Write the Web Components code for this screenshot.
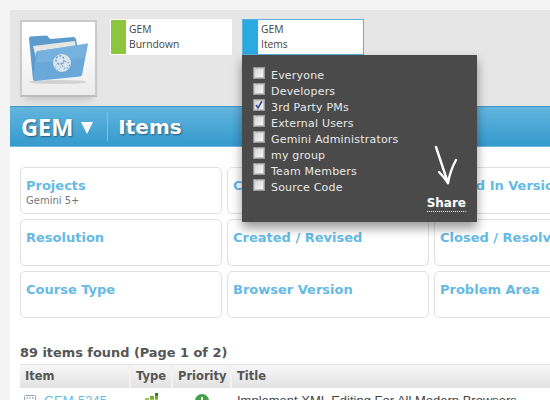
<!DOCTYPE html>
<html>
<head>
<meta charset="utf-8">
<style>
  html, body { margin: 0; height: 100%; overflow: hidden; }
  body { background: #f4f4f4; padding: 10px 0 0 10px; box-sizing: border-box; width: 550px; height: 400px; font-family: "DejaVu Sans", sans-serif; }
</style>
</head>
<body>
<gem-page>
  <gem-top slot="top">
    <gem-logo></gem-logo>
    <gem-card color="#8cc63f" line1="GEM" line2="Burndown"></gem-card>
    <gem-card color="#29abe2" line1="GEM" line2="Items" active>
      <gem-share>
        <gem-check label="Everyone"></gem-check>
        <gem-check label="Developers"></gem-check>
        <gem-check label="3rd Party PMs" checked></gem-check>
        <gem-check label="External Users"></gem-check>
        <gem-check label="Gemini Administrators"></gem-check>
        <gem-check label="my group"></gem-check>
        <gem-check label="Team Members"></gem-check>
        <gem-check label="Source Code"></gem-check>
      </gem-share>
    </gem-card>
  </gem-top>
  <gem-bar slot="bar" project="GEM" title="Items"></gem-bar>
  <gem-filters slot="filters">
    <gem-filter label="Projects" value="Gemini 5+"></gem-filter>
    <gem-filter label="Component"></gem-filter>
    <gem-filter label="Found In Version"></gem-filter>
    <gem-filter label="Resolution"></gem-filter>
    <gem-filter label="Created / Revised"></gem-filter>
    <gem-filter label="Closed / Resolved"></gem-filter>
    <gem-filter label="Course Type"></gem-filter>
    <gem-filter label="Browser Version"></gem-filter>
    <gem-filter label="Problem Area"></gem-filter>
  </gem-filters>
  <gem-results slot="results"></gem-results>
</gem-page>
<script>
class GemPage extends HTMLElement {
    constructor() {
        super();
        this.attachShadow({ mode: 'open' });
        this.shadowRoot.innerHTML = /* html */`
        <style>
            :host { display: block; width: 540px; height: 390px; background: #fff; overflow: hidden; }
            .top { background: #e6e6e6; height: 96px; }
        </style>
        <div class="top"><slot name="top"></slot></div>
        <slot name="bar"></slot>
        <slot name="filters"></slot>
        <slot name="results"></slot>
        `;
    }
}

class GemTop extends HTMLElement {
    constructor() {
        super();
        this.attachShadow({ mode: 'open' });
        this.shadowRoot.innerHTML = /* html */`
        <style>
            :host { display: flex; gap: 10px; padding: 9px 0 0 10px; align-items: flex-start; }
        </style>
        <slot></slot>
        `;
    }
}

class GemLogo extends HTMLElement {
    constructor() {
        super();
        this.attachShadow({ mode: 'open' });
        this.shadowRoot.innerHTML = /* html */`
        <style>
            :host { display: block; width: 73px; height: 73px; margin: 1px 3px 0 0; border: 2px solid #cbcbcb; border-bottom-color: #bdbdbd; background: linear-gradient(#fff 25%, #ebebeb); box-shadow: 0 7px 8px -5px rgba(0,0,0,.18); }
            svg { display: block; }
        </style>
        <svg width="73" height="73" viewBox="0 0 73 73">
            <ellipse cx="36" cy="60" rx="29" ry="2" fill="#c4c4c4" opacity=".7"/>
            <path d="M7 16 8 14.5 25 13.5 28 17 52 15 54 17 58 38 11 58Z" fill="#5b9bcd"/>
            <path d="M11 24 53 19 55 34 16 44Z" fill="#e6e6e4"/>
            <path d="M16 29 66 21.5 60 53 Q60 54 58 54.5 L13 59 Q11 59 11 57 L14 31 Q14 29 16 29Z" fill="#69a8d9"/>
            <path d="M16 29 66 21.5 63 36 14 41Z" fill="#84b9e1" opacity=".55"/>
            <circle cx="40" cy="41" r="9" fill="#d9e6f0"/>
            <circle cx="38" cy="38" r="4" fill="none" stroke="#6d9fc4" stroke-width="1.5" stroke-dasharray="2 1.5"/>
            <circle cx="44" cy="43" r="3.5" fill="none" stroke="#7aa8ca" stroke-width="1.2" stroke-dasharray="1.5 1.5"/>
            <circle cx="36" cy="45" r="2.5" fill="none" stroke="#8fb4d0" stroke-width="1" stroke-dasharray="1 1"/>
        </svg>
        `;
    }
}

class GemCard extends HTMLElement {
    constructor() {
        super();
        this.attachShadow({ mode: 'open' });
    }

    connectedCallback() {
        const active = this.hasAttribute('active');
        this.shadowRoot.innerHTML = /* html */`
        <style>
            :host { display: block; position: relative; width: 122px; height: 36px; box-sizing: border-box; background: #fff; border: 1px solid ${active ? '#5bb2dc' : '#fff'}; font: 10.3px/15px "Open Sans", sans-serif; color: #444; }
            :host::before { content: ""; position: absolute; z-index: -1; left: 10px; right: 6px; bottom: 0; height: 8px; box-shadow: 0 4px 7px rgba(0,0,0,.3); }
            .wrap { display: flex; height: 100%; background: #fff; }
            .tab { width: 15px; background: ${this.getAttribute('color')}; }
            .text { padding: 1.5px 0 0 3px; }
        </style>
        <div class="wrap">
            <div class="tab"></div>
            <div class="text"><div>${this.getAttribute('line1')}</div><div>${this.getAttribute('line2')}</div></div>
        </div>
        <slot></slot>
        `;
    }
}

class GemShare extends HTMLElement {
    constructor() {
        super();
        this.attachShadow({ mode: 'open' });
        this.shadowRoot.innerHTML = /* html */`
        <style>
            :host { display: block; position: absolute; z-index: 5; left: -1px; top: 35px; width: 235px; height: 167px; box-sizing: border-box; padding: 12px 0 0 11px; background: #4a4a4a; box-shadow: 0 6px 10px rgba(0,0,0,.4); font-family: "DejaVu Sans", sans-serif; }
            .arrow { position: absolute; left: 190px; top: 88px; }
            .share { position: absolute; right: 11px; top: 141px; font: bold 12px/15px "DejaVu Sans", sans-serif; color: #fff; border-bottom: 1px dotted #fff; }
        </style>
        <slot></slot>
        <svg class="arrow" width="36" height="48" viewBox="0 0 36 48">
            <path d="M4 4 Q10 22 16 40 Q18 28 24 17" fill="none" stroke="#fff" stroke-width="2.4" stroke-linecap="round" stroke-linejoin="round"/>
            <path d="M16 40 Q12 34 7 29" fill="none" stroke="#fff" stroke-width="2.4" stroke-linecap="round"/>
        </svg>
        <span class="share">Share</span>
        `;
    }
}

class GemCheck extends HTMLElement {
    constructor() {
        super();
        this.attachShadow({ mode: 'open' });
    }

    connectedCallback() {
        const tick = this.hasAttribute('checked')
            ? '<svg width="10" height="10" viewBox="0 0 10 10"><path d="M2 5 4 8 8 1" fill="none" stroke="#3b4c96" stroke-width="1.6"/></svg>'
            : '';
        this.shadowRoot.innerHTML = /* html */`
        <style>
            :host { display: flex; align-items: center; height: 16px; color: #e8e8e8; font-size: 11px; letter-spacing: .2px; }
            .box { display: flex; align-items: center; justify-content: center; width: 10px; height: 10px; margin: -5px 6px 0 0; border: 1px solid #9a9a9a; outline: 1px solid #c4c4c4; outline-offset: -2px; background: linear-gradient(135deg, #cfcfcf, #fdfdfd); }
        </style>
        <span class="box">${tick}</span><span>${this.getAttribute('label')}</span>
        `;
    }
}

class GemBar extends HTMLElement {
    constructor() {
        super();
        this.attachShadow({ mode: 'open' });
    }

    connectedCallback() {
        this.shadowRoot.innerHTML = /* html */`
        <style>
            :host { display: flex; align-items: center; height: 41px; box-sizing: border-box; border-top: 1px solid #3f97c6; border-bottom: 1px solid #69bde3; background: linear-gradient(#62b5de, #359acd); color: #fff; text-shadow: 1px 1px 2px rgba(0,0,0,.45); padding-left: 11px; }
            .project { font: bold 23.5px/30px "Open Sans", sans-serif; }
            .caret { width: 0; height: 0; margin: 3px 14px 0 8px; border: 6px solid transparent; border-top: 12px solid #fff; border-bottom: 0; }
            .sep { width: 1px; height: 29px; background: #7cc3e6; }
            .title { margin-left: 10px; font: bold 20px/30px "DejaVu Sans", sans-serif; }
        </style>
        <span class="project">${this.getAttribute('project')}</span>
        <span class="caret"></span>
        <span class="sep"></span>
        <span class="title">${this.getAttribute('title')}</span>
        `;
    }
}

class GemFilters extends HTMLElement {
    constructor() {
        super();
        this.attachShadow({ mode: 'open' });
        this.shadowRoot.innerHTML = /* html */`
        <style>
            :host { display: grid; grid-template-columns: 202px 202px 202px; grid-auto-rows: 47px; gap: 5px; padding: 20px 0 0 10px; overflow: hidden; }
        </style>
        <slot></slot>
        `;
    }
}

class GemFilter extends HTMLElement {
    constructor() {
        super();
        this.attachShadow({ mode: 'open' });
    }

    connectedCallback() {
        const value = this.getAttribute('value');
        this.shadowRoot.innerHTML = /* html */`
        <style>
            :host { display: block; box-sizing: border-box; border: 1px solid #e0e0e0; border-radius: 5px; padding: 10px 0 0 5px; white-space: nowrap; }
            .label { font: bold 13px/16px "DejaVu Sans", sans-serif; color: #64bae4; }
            .value { font: 10px/13px "DejaVu Sans", sans-serif; color: #777; }
        </style>
        <div class="label">${this.getAttribute('label')}</div>
        ${value ? `<div class="value">${value}</div>` : ''}
        `;
    }
}

class GemResults extends HTMLElement {
    constructor() {
        super();
        this.attachShadow({ mode: 'open' });
        this.shadowRoot.innerHTML = /* html */`
        <style>
            :host { display: block; padding: 26px 0 0 10px; color: #555; font-family: "DejaVu Sans", sans-serif; }
            h2 { margin: 0; font: bold 12.9px/18px "DejaVu Sans", sans-serif; color: #555; }
            .table { margin-top: 2px; }
            .row { display: grid; grid-template-columns: 111px 42px 59px auto; height: 24px; box-sizing: border-box; border-top: 1px solid #e2e2e2; background: linear-gradient(#f7f7f7, #e2e2e2); font: bold 11.5px/23px "DejaVu Sans", sans-serif; }
            .row span { padding-left: 5px; border-right: 2px solid #f2f2f2; }
            .row span:last-child { border-right: 0; }
            .item { display: grid; grid-template-columns: 111px 42px 59px auto; font: 13px/16px "Liberation Sans", sans-serif; }
            .item > span { display: flex; align-items: flex-start; height: 20px; overflow: hidden; }
            .link { color: #64bae4; gap: 8px; padding: 5px 0 0 4px; box-sizing: border-box; }
            .link svg { margin-top: 2px; }
            .type { padding: 5px 0 0 14px; box-sizing: border-box; }
            .priority { padding: 6px 0 0 22px; box-sizing: border-box; }
            .item .title { padding: 5px 0 0 5px; box-sizing: border-box; color: #444; white-space: nowrap; }
        </style>
        <h2>89 items found (Page 1 of 2)</h2>
        <div class="table">
            <div class="row"><span>Item</span><span>Type</span><span>Priority</span><span>Title</span></div>
            <div class="item">
                <span class="link"><svg width="12" height="12" viewBox="0 0 12 12"><rect x=".5" y=".5" width="11" height="11" rx="1" fill="#fff" stroke="#98a6b8"/><path d="M2.5 3H4M5.200 3h1.500M8 3h1.500" stroke="#6b7f99"/></svg>GEM-5245</span>
                <span class="type"><svg width="14" height="12" viewBox="0 0 14 12"><path d="M10 0h3v3h-3z" fill="#2f7d1f"/><path d="M5 3h4v3H5zM10 3h3v3h-3z" fill="#76ac32"/><path d="M0 5h4v3H0zM5 6h4v3H5zM10 6h3v3h-3z" fill="#9cc45a"/></svg></span>
                <span class="priority"><svg width="14" height="14" viewBox="0 0 14 14"><circle cx="7" cy="7" r="7" fill="#43a047"/><path d="M7 3v5M7 9.5v2" stroke="#fff" stroke-width="2"/></svg></span>
                <span class="title">Implement XML Editing For All Modern Browsers</span>
            </div>
        </div>
        `;
    }
}

customElements.define('gem-page', GemPage);
customElements.define('gem-top', GemTop);
customElements.define('gem-logo', GemLogo);
customElements.define('gem-card', GemCard);
customElements.define('gem-share', GemShare);
customElements.define('gem-check', GemCheck);
customElements.define('gem-bar', GemBar);
customElements.define('gem-filters', GemFilters);
customElements.define('gem-filter', GemFilter);
customElements.define('gem-results', GemResults);
</script>
</body>
</html>
